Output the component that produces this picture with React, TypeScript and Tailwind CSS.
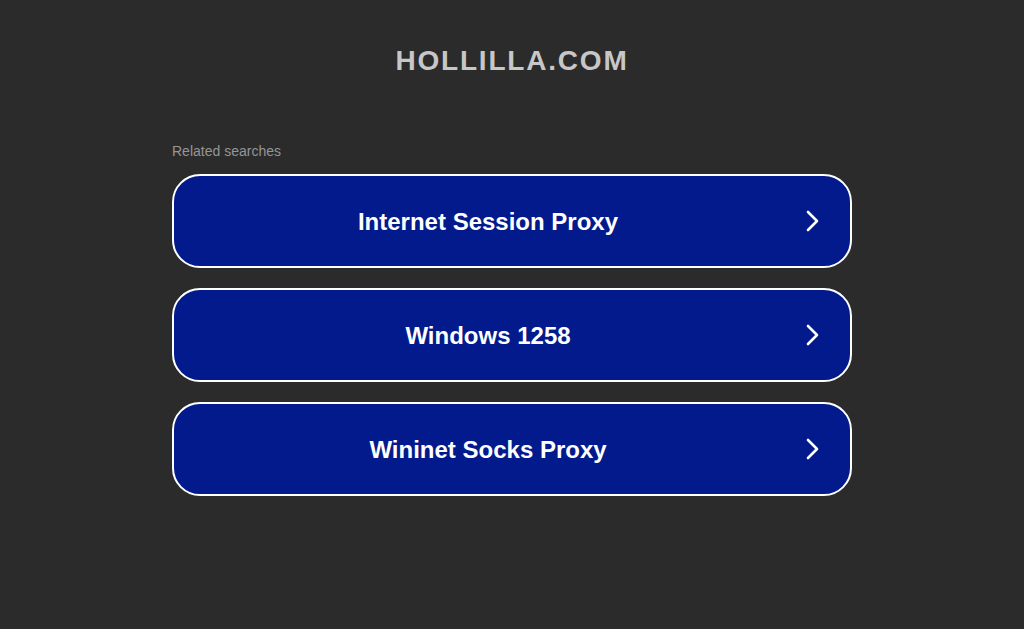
const searches = ["Internet Session Proxy", "Windows 1258", "Wininet Socks Proxy"];

function Chevron() {
    return (
        <svg width="14" height="22" viewBox="0 0 14 22" fill="none">
            <path d="M3 2l9 9-9 9" stroke="white" strokeWidth="2.6" strokeLinecap="round" strokeLinejoin="round" />
        </svg>
    );
}

export default function App() {
    return (
        <main className="min-h-[629px] bg-[#2b2b2b] font-['Liberation_Sans',Arial,sans-serif]">
            <h1 className="pt-[43px] text-center text-[28px] leading-[36px] font-bold tracking-[1.8px] text-[#c7c7c7]">
                HOLLILLA.COM
            </h1>

            <div className="mx-auto mt-[64px] w-[680px]">
                <p className="text-[14px] leading-[16px] text-[#959595]">Related searches</p>
                <div className="mt-[15px] flex flex-col gap-[20px]">
                    {searches.map(s => (
                        <a
                            key={s}
                            href="#"
                            className="flex h-[94px] items-center rounded-[28px] border-2 border-white bg-[#021a8b] text-white"
                        >
                            <span className="flex-1 pl-[2px] pt-[2px] text-center text-[24px] font-bold">{s}</span>
                            <span className="mr-[26px] flex w-[24px] justify-center">
                                <Chevron />
                            </span>
                        </a>
                    ))}
                </div>
            </div>
        </main>
    );
}
